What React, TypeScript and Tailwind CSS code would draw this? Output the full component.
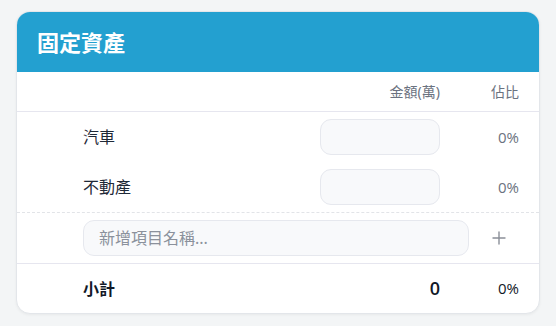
import { useState } from "react";

interface Item {
  name: string;
  amount: string;
}

const font = { fontFamily: '"Noto Sans", "Noto Sans CJK TC", sans-serif' };
const latin = { fontFamily: '"Open Sans", "Noto Sans CJK TC", sans-serif' };

function PlusIcon() {
  return (
    <svg width="14" height="14" viewBox="0 0 14 14" fill="none" stroke="#8a8f98" strokeWidth="1.4" strokeLinecap="round">
      <path d="M7 1v12M1 7h12" />
    </svg>
  );
}

export default function App() {
  const [items] = useState<Item[]>([
    { name: "汽車", amount: "" },
    { name: "不動產", amount: "" },
  ]);

  return (
    <div className="min-h-[326px] w-[556px] bg-[#f3f5f6] pt-[11px] pl-4" style={font}>
      <div className="w-[524px] overflow-hidden rounded-[14px] border border-[#e3e6ea] bg-white shadow-[0_1px_3px_rgba(0,0,0,0.05)]">
        <div className="flex h-[60px] items-center bg-[#23a0d0] px-5">
          <h2 className="text-[22px] font-bold text-white">固定資產</h2>
        </div>

        <div className="flex h-[40px] items-center border-b border-[#e6e6ef] pr-[20px] text-sm text-[#6b7280]">
          <div className="flex-1" />
          <div className="w-[120px] text-right">金額(萬)</div>
          <div className="w-[79px] text-right">佔比</div>
        </div>

        {items.map((item) => (
          <div key={item.name} className="flex h-[50px] items-center pl-[66px] pr-[20px]">
            <div className="flex-1 text-base text-[#1f2937]">{item.name}</div>
            <input
              className="h-[36px] w-[120px] rounded-[11px] border border-[#e6e8ee] bg-[#f8f9fb] px-3 text-right text-base outline-none"
              defaultValue={item.amount}
            />
            <div className="w-[79px] text-right text-[15px] text-[#6b7280]" style={latin}>0%</div>
          </div>
        ))}

        <div className="flex h-[51px] items-center border-t border-dashed border-[#e2e4e8] pl-[66px] pr-[10px]">
          <input
            className="h-[36px] flex-1 rounded-[11px] border border-[#e6e8ee] bg-[#f8f9fb] px-[15px] text-base text-[#1f2937] outline-none placeholder:text-[#8b919c]"
            placeholder="新增項目名稱..."
          />
          <button className="flex h-[36px] w-[60px] items-center justify-center">
            <PlusIcon />
          </button>
        </div>

        <div className="flex h-[50px] items-center border-t border-[#e6e6ef] pl-[66px] pr-[20px]">
          <div className="flex-1 text-base font-bold text-[#111827]">小計</div>
          <div className="w-[120px] text-right text-[18px] font-semibold text-[#111827]" style={latin}>0</div>
          <div className="w-[79px] text-right text-[15px] font-medium text-[#111827]" style={latin}>0%</div>
        </div>
      </div>
    </div>
  );
}
